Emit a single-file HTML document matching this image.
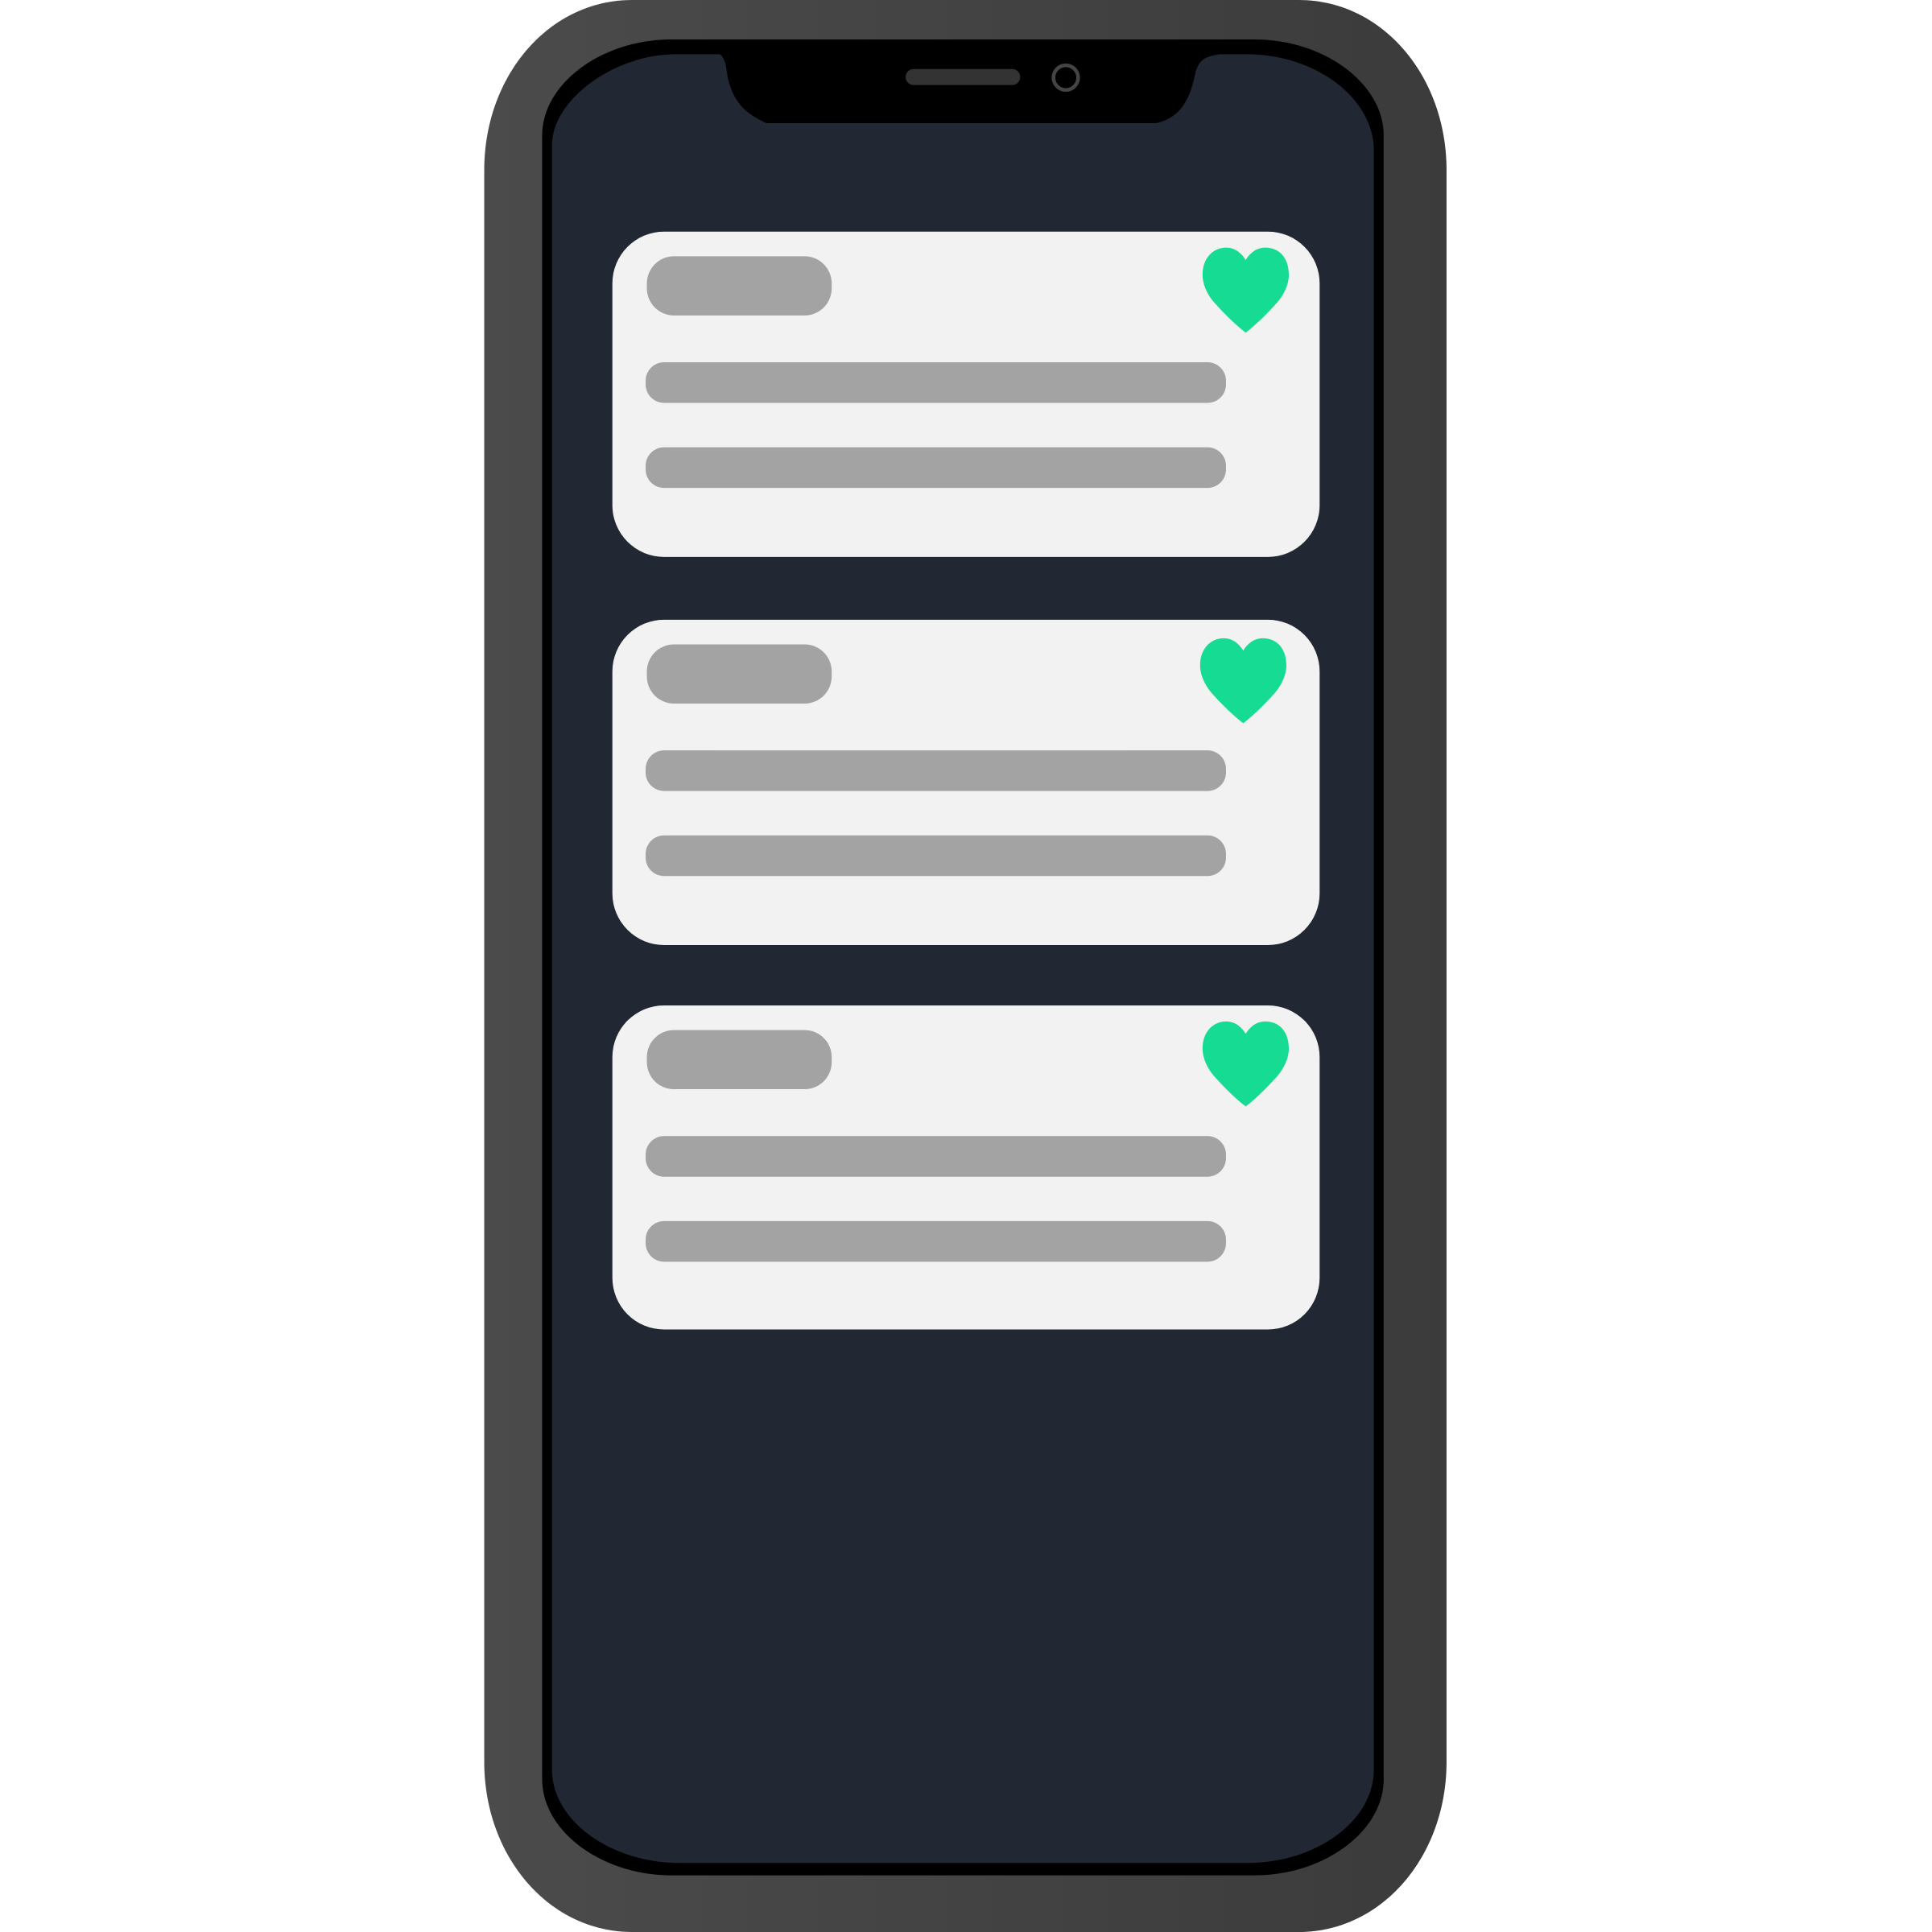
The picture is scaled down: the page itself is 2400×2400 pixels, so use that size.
<!DOCTYPE html>
<html><head><style>html,body{margin:0;padding:0;background:#fff;width:2400px;height:2400px;overflow:hidden}</style></head>
<body>
<svg width="2400" height="2400" viewBox="0 0 1568 1568" xmlns="http://www.w3.org/2000/svg">
<defs>
<linearGradient id="bz" x1="0" x2="1" y1="0" y2="0"><stop offset="0" stop-color="#4b4b4b"/><stop offset="1" stop-color="#3b3b3b"/></linearGradient>
<g id="heart"><path d="M35 10 C30 2 24 0 19 0 C9 0 0 8 0 22 C0 30 4 38 9 44 C17 53 26 62 35 69 C44 62 53 53 61 44 C66 38 70 30 70 22 C70 8 62 0 51 0 C46 0 40 2 35 10 Z" fill="#16db93"/></g>
</defs>
<path d="M513 0 H1054 C1122 0 1174 62 1174 138 V1430 C1174 1506 1122 1568 1054 1568 H513 C445 1568 393 1506 393 1430 V138 C393 62 445 0 513 0 Z" fill="url(#bz)"/>
<path d="M545 32 H1018 C1075 32 1123 68 1123 110 V1444 C1123 1486 1075 1522 1018 1522 H545 C488 1522 440 1486 440 1444 V110 C440 68 488 32 545 32 Z" fill="#000"/>
<path d="M548 44 H1012 C1068 44 1115 80 1115 122 V1436 C1115 1478 1068 1512 1012 1512 H552 C496 1512 448 1478 448 1436 V118 C448 80 500 44 548 44 Z" fill="#212833"/>
<path d="M578 40 C592 46 588 56 592 68 C598 88 610 94 622 100 H938 C958 96 966 80 970 60 C973 48 978 46 990 44 Z" fill="#000"/>
<rect x="735" y="56" width="93" height="13" rx="6.5" fill="#333"/>
<circle cx="865" cy="63" r="10" fill="none" stroke="#444" stroke-width="3"/>
<g>
<rect x="497" y="188" width="574" height="264" rx="42" fill="#f2f2f2"/>
<rect x="525" y="208" width="150" height="48" rx="22" fill="#a3a3a3"/>
<rect x="524" y="294" width="471" height="33" rx="15" fill="#a3a3a3"/>
<rect x="524" y="363" width="471" height="33" rx="15" fill="#a3a3a3"/>
<use href="#heart" x="976" y="201"/>
</g>
<g>
<rect x="497" y="503" width="574" height="264" rx="42" fill="#f2f2f2"/>
<rect x="525" y="523" width="150" height="48" rx="22" fill="#a3a3a3"/>
<rect x="524" y="609" width="471" height="33" rx="15" fill="#a3a3a3"/>
<rect x="524" y="678" width="471" height="33" rx="15" fill="#a3a3a3"/>
<use href="#heart" x="974" y="518"/>
</g>
<g>
<rect x="497" y="816" width="574" height="263" rx="42" fill="#f2f2f2"/>
<rect x="525" y="836" width="150" height="48" rx="22" fill="#a3a3a3"/>
<rect x="524" y="922" width="471" height="33" rx="15" fill="#a3a3a3"/>
<rect x="524" y="991" width="471" height="33" rx="15" fill="#a3a3a3"/>
<use href="#heart" x="976" y="829"/>
</g>
</svg>
</body></html>
